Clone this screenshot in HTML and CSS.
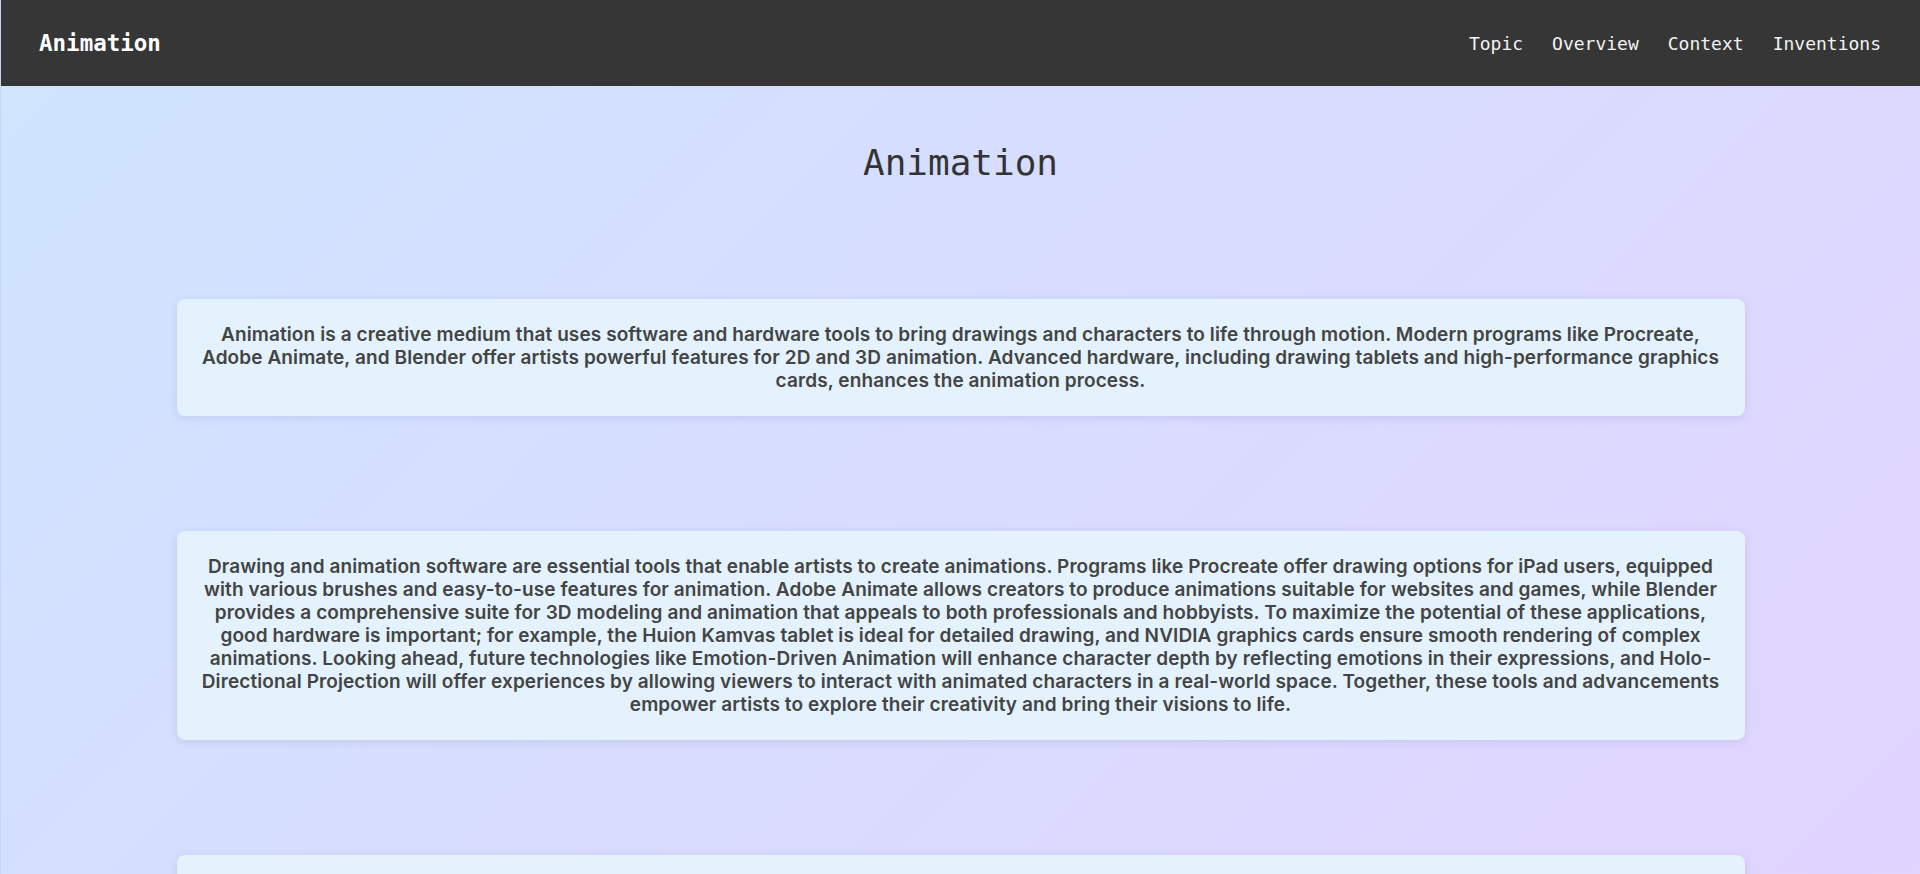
FILE: index.html
```html
<!DOCTYPE html>
<html lang="en">
<head>
<meta charset="utf-8">
<title>Animation</title>
<link rel="stylesheet" href="styles.css">
</head>
<body>
<header class="topbar">
  <div class="brand">Animation</div>
  <nav class="nav">
    <a href="#topic">Topic</a>
    <a href="#overview">Overview</a>
    <a href="#context">Context</a>
    <a href="#inventions">Inventions</a>
  </nav>
</header>
<main class="content">
  <h1 class="title">Animation</h1>
  <section class="card" id="topic">
    <p>Animation is a creative medium that uses software and hardware tools to bring drawings and characters to life through motion. Modern programs like Procreate, Adobe Animate, and Blender offer artists powerful features for 2D and 3D animation. Advanced hardware, including drawing tablets and high-performance graphics cards, enhances the animation process.</p>
  </section>
  <section class="card" id="overview">
    <p>Drawing and animation software are essential tools that enable artists to create animations. Programs like Procreate offer drawing options for iPad users, equipped with various brushes and easy-to-use features for animation. Adobe Animate allows creators to produce animations suitable for websites and games, while Blender provides a comprehensive suite for 3D modeling and animation that appeals to both professionals and hobbyists. To maximize the potential of these applications, good hardware is important; for example, the Huion Kamvas tablet is ideal for detailed drawing, and NVIDIA graphics cards ensure smooth rendering of complex animations. Looking ahead, future technologies like Emotion-Driven Animation will enhance character depth by reflecting emotions in their expressions, and Holo-Directional Projection will offer experiences by allowing viewers to interact with animated characters in a real-world space. Together, these tools and advancements empower artists to explore their creativity and bring their visions to life.</p>
  </section>
  <section class="card" id="context">
    <p>Animation has grown from hand-drawn frames to digital pipelines, and the tools artists use continue to evolve alongside new hardware.</p>
  </section>
</main>
</body>
</html>
```

FILE: styles.css
```css
html, body {
  margin: 0;
  padding: 0;
}
body {
  min-height: 100vh;
  background: linear-gradient(135deg, #cfe5ff 0%, #d8dcff 50%, #e1d4ff 100%);
  background-attachment: fixed;
  font-family: "Inter", "Noto Sans", sans-serif;
  color: #444;
  border-left: 1px solid #c4d6f5;
}
.topbar {
  height: 86px;
  box-sizing: border-box;
  background: #363636;
  display: flex;
  align-items: center;
  justify-content: space-between;
  padding: 0 39px 0 38px;
}
.brand {
  font-family: "DejaVu Sans Mono", monospace;
  font-weight: bold;
  font-size: 22.5px;
  color: #fff;
}
.nav {
  display: flex;
  gap: 29px;
}
.nav a {
  font-family: "DejaVu Sans Mono", monospace;
  font-size: 18px;
  color: #f2f2f2;
  text-decoration: none;
}
.content {
  display: flex;
  flex-direction: column;
  align-items: center;
  gap: 115px;
  padding-top: 56px;
}
.title {
  margin: 0;
  font-family: "DejaVu Sans Mono", monospace;
  font-weight: normal;
  font-size: 36px;
  line-height: 42px;
  color: #333;
}
.card {
  box-sizing: border-box;
  width: 1568px;
  max-width: 82%;
  background: #e3f2fd;
  border-radius: 8px;
  box-shadow: 0 2px 8px rgba(80, 90, 160, 0.15);
  padding: 24px;
}
.card p {
  margin: 0;
  text-align: center;
  font-size: 19px;
  font-weight: 600;
  letter-spacing: 0.1px;
  line-height: 23px;
}
```
